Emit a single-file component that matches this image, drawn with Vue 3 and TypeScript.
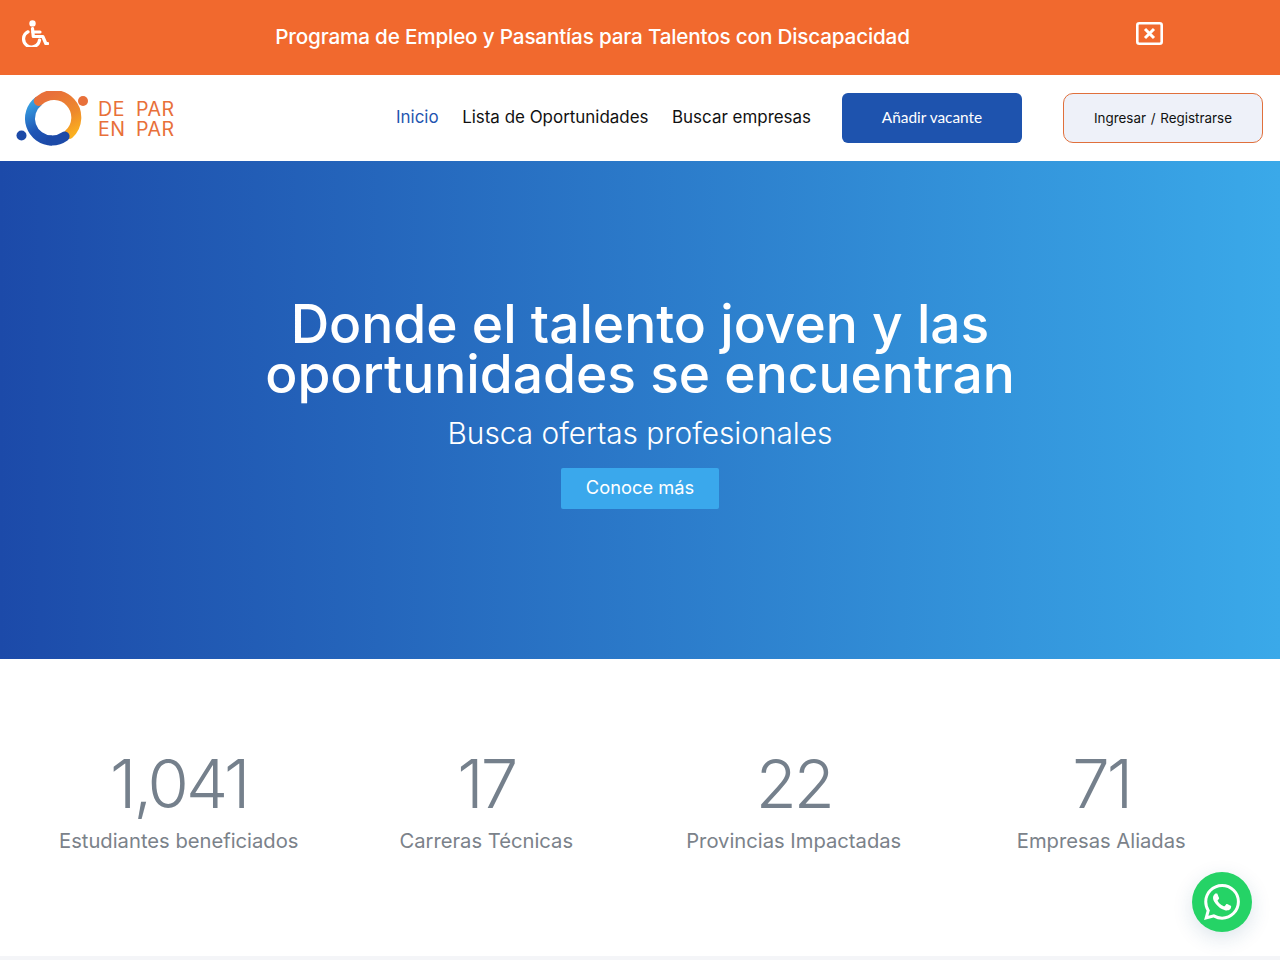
<script setup lang="ts">
const links = [
  { label: 'Inicio', active: true },
  { label: 'Lista de Oportunidades', active: false },
  { label: 'Buscar empresas', active: false }
]

const stats = [
  { value: '1,041', label: 'Estudiantes beneficiados' },
  { value: '17', label: 'Carreras Técnicas' },
  { value: '22', label: 'Provincias Impactadas' },
  { value: '71', label: 'Empresas Aliadas' }
]
</script>

<template>
  <div class="page">
    <div class="banner">
      <svg class="wheel" viewBox="0 0 27 27" fill="none" stroke="#fff" stroke-width="3.2" stroke-linecap="round" stroke-linejoin="round">
        <circle cx="10.5" cy="3.4" r="3.2" fill="#fff" stroke="none" />
        <path d="M10.5 8.5l.8 8h9.5l3 7h1.8" />
        <path d="M11 12h7" />
        <path d="M6 11.8A8 8 0 1 0 17.5 20" />
      </svg>
      <p class="banner-text">Programa de Empleo y Pasantías para Talentos con Discapacidad</p>
      <svg class="close" viewBox="0 0 27 23" fill="none" stroke="#fff">
        <rect x="1.3" y="1.3" width="24.4" height="20.4" rx="2" stroke-width="2.6" />
        <path d="M9 7l9 9M18 7l-9 9" stroke-width="3" />
      </svg>
    </div>

    <header class="nav">
      <div class="logo">
        <svg class="logo-mark" viewBox="0 0 73 55" fill="none">
          <defs>
            <linearGradient id="blueArc" gradientUnits="userSpaceOnUse" x1="14" y1="8" x2="36" y2="50">
              <stop offset="0" stop-color="#3aa9e8" />
              <stop offset="0.65" stop-color="#1f55b5" />
              <stop offset="1" stop-color="#1c4aa8" />
            </linearGradient>
            <linearGradient id="orangeArc" gradientUnits="userSpaceOnUse" x1="30" y1="6" x2="54" y2="46">
              <stop offset="0" stop-color="#e8703a" />
              <stop offset="0.6" stop-color="#ee8a2c" />
              <stop offset="1" stop-color="#fbb11f" />
            </linearGradient>
          </defs>
          <path d="M22.8 9.9A22 22 0 0 0 36 49.5" stroke="url(#blueArc)" stroke-width="10" />
          <path d="M22.8 9.9A22 22 0 0 1 53 43" stroke="url(#orangeArc)" stroke-width="10" stroke-linecap="round" />
          <path d="M35 49.5A22 22 0 0 0 48.6 45.5" stroke="#1c4aa8" stroke-width="10" stroke-linecap="round" />
          <circle cx="67" cy="10" r="5" fill="#e8703a" />
          <circle cx="5.5" cy="44.5" r="5" fill="#1c4aa8" />
        </svg>
        <div class="logo-text">
          <span>DE</span><span>PAR</span>
          <span>EN</span><span>PAR</span>
        </div>
      </div>
      <nav class="links">
        <a v-for="l in links" :key="l.label" :class="{ active: l.active }">{{ l.label }}</a>
      </nav>
      <button class="btn-add">Añadir vacante</button>
      <button class="btn-login">Ingresar / Registrarse</button>
    </header>

    <section class="hero">
      <h1>Donde el talento joven y las<br />oportunidades se encuentran</h1>
      <p class="sub">Busca ofertas profesionales</p>
      <button class="btn-more">Conoce más</button>
    </section>

    <section class="stats">
      <div v-for="s in stats" :key="s.label" class="stat">
        <div class="num">{{ s.value }}</div>
        <div class="lab">{{ s.label }}</div>
      </div>
    </section>
    <div class="foot"></div>

    <a class="wa">
      <svg viewBox="0 0 24 24" fill="#fff">
        <path d="M17.472 14.382c-.297-.149-1.758-.867-2.03-.967-.273-.099-.471-.148-.67.15-.197.297-.767.966-.94 1.164-.173.199-.347.223-.644.075-.297-.15-1.255-.463-2.39-1.475-.883-.788-1.48-1.761-1.653-2.059-.173-.297-.018-.458.13-.606.134-.133.298-.347.446-.52.149-.174.198-.298.298-.497.099-.198.05-.371-.025-.52-.075-.149-.669-1.612-.916-2.207-.242-.579-.487-.5-.669-.51-.173-.008-.371-.01-.57-.01-.198 0-.52.074-.792.372-.272.297-1.04 1.016-1.04 2.479 0 1.462 1.065 2.875 1.213 3.074.149.198 2.096 3.2 5.077 4.487.709.306 1.262.489 1.694.625.712.227 1.36.195 1.871.118.571-.085 1.758-.719 2.006-1.413.248-.694.248-1.289.173-1.413-.074-.124-.272-.198-.57-.347m-5.421 7.403h-.004a9.87 9.87 0 01-5.031-1.378l-.361-.214-3.741.982.998-3.648-.235-.374a9.86 9.86 0 01-1.51-5.26c.001-5.45 4.436-9.884 9.888-9.884 2.64 0 5.122 1.03 6.988 2.898a9.825 9.825 0 012.893 6.994c-.003 5.45-4.437 9.884-9.885 9.884m8.413-18.297A11.815 11.815 0 0012.05 0C5.495 0 .16 5.335.157 11.892c0 2.096.547 4.142 1.588 5.945L.057 24l6.305-1.654a11.882 11.882 0 005.683 1.448h.005c6.554 0 11.89-5.335 11.893-11.893a11.821 11.821 0 00-3.48-8.413z" />
      </svg>
    </a>
  </div>
</template>

<style>
html, body { margin: 0; background: #fff; }
</style>

<style scoped>
.page {
  position: relative;
  height: 960px;
  overflow: hidden;
  font-family: Inter, "Liberation Sans", sans-serif;
}

.banner {
  height: 75px;
  background: #f1692e;
  display: flex;
  align-items: center;
  padding: 0 116px 0 22px;
  color: #fff;
}
.wheel { width: 27px; height: 27px; margin-top: -8px; }
.close { width: 27px; height: 23px; margin-top: -8px; margin-right: 1px; }
.banner-text {
  flex: 1;
  margin: -3px 0 0;
  text-align: center;
  font-size: 20.7px;
  font-weight: 500;
  letter-spacing: -0.18px;
}

.nav {
  height: 86px;
  background: #fff;
  display: flex;
  align-items: center;
  padding: 0 17px 0 16px;
}
.logo { display: flex; align-items: center; gap: 9px; }
.logo-mark { width: 73px; height: 55px; }
.logo-text {
  display: grid;
  grid-template-columns: 26px auto;
  column-gap: 12px;
  margin-top: 2px;
  font-size: 19.6px;
  line-height: 20px;
  color: #e8703a;
  letter-spacing: 0.5px;
}
.links {
  margin-left: auto;
  margin-top: -2px;
  display: flex;
  gap: 23.5px;
  font-size: 16.95px;
  color: #111;
}
.links a.active { color: #1f55b0; }
.btn-add {
  margin-left: 31px;
  width: 180px;
  height: 50px;
  padding: 0 0 3px;
  border: none;
  border-radius: 6px;
  background: #1e53ae;
  color: #fff;
  font-family: Lato, sans-serif;
  font-size: 15.4px;
}
.btn-login {
  margin-left: 41px;
  width: 200px;
  height: 50px;
  padding: 0;
  border: 1px solid #e0703c;
  border-radius: 10px;
  background: #eef1f9;
  color: #111;
  font-family: Inter, sans-serif;
  font-size: 13.4px;
  word-spacing: 1px;
}

.hero {
  height: 498px;
  background: linear-gradient(90deg, #1c4aa9 0%, #3aa9e9 100%);
  color: #fff;
  display: flex;
  flex-direction: column;
  align-items: center;
  padding-top: 138px;
  box-sizing: border-box;
  text-align: center;
}
.hero h1 {
  margin: 0;
  font-size: 53.3px;
  line-height: 50px;
  font-weight: 500;
}
.sub {
  margin: 12px 0 0;
  font-size: 29.8px;
  line-height: 45px;
  font-weight: 300;
}
.btn-more {
  margin-top: 12px;
  width: 158px;
  height: 41px;
  padding: 0 0 3px;
  border: none;
  border-radius: 2px;
  background: #3aa8ec;
  color: #fff;
  font-family: Inter, sans-serif;
  font-size: 18.3px;
}

.stats {
  height: 297px;
  box-sizing: border-box;
  padding: 86px 25px 0;
  display: grid;
  grid-template-columns: repeat(4, 1fr);
  text-align: center;
}
.num {
  font-size: 67px;
  line-height: 78px;
  font-weight: 300;
  letter-spacing: -3px;
  color: #75808c;
}
.lab {
  margin-top: 3px;
  font-size: 20.2px;
  line-height: 30px;
  color: #7b828a;
}
.foot { height: 4px; background: #f4f5f8; }

.wa {
  position: absolute;
  left: 1192px;
  top: 872px;
  width: 60px;
  height: 60px;
  border-radius: 50%;
  background: #25d366;
  box-shadow: 0 6px 20px rgba(30, 80, 120, 0.15);
  display: flex;
  align-items: center;
  justify-content: center;
}
.wa svg { width: 36px; height: 36px; }
</style>
